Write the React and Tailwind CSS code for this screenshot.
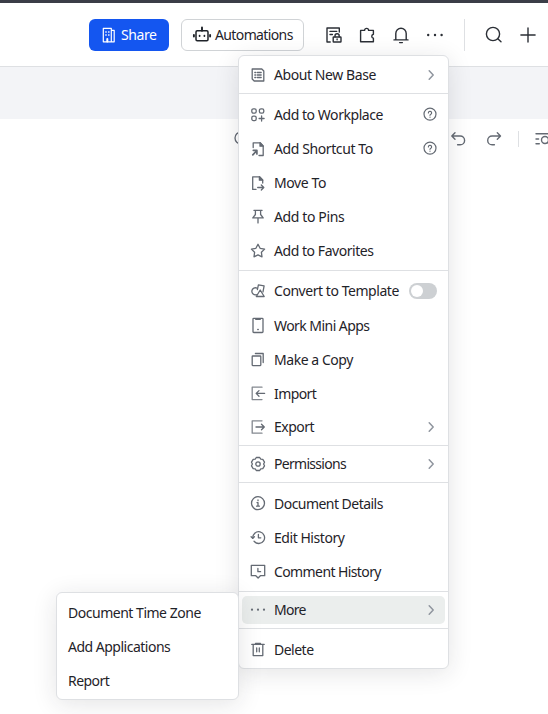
const ICONS = {
  about: (
    <>
      <path d="M1.2 1h9.6l2 2v10H3.2l-2-2z" />
      <path d="M3.8 4.5h.9M6.3 4.5h3.9M3.8 7h.9M6.3 7h3.9M3.8 9.5h.9M6.3 9.5h3.9" />
    </>
  ),
  workplace: (
    <>
      <rect x=".8" y=".8" width="4.4" height="4.4" rx="1.6" />
      <rect x="8.4" y=".8" width="4.4" height="4.4" rx="1.6" />
      <rect x=".8" y="8.2" width="4.4" height="4.4" rx="1.6" />
      <path d="M10.6 8v5M8.1 10.5h5" />
    </>
  ),
  shortcut: (
    <>
      <path d="M2.2 5.5V.8h7l3 3.2v9.5H8" />
      <path d="M9 .8v3.4h3.2z" fill="currentColor" />
      <path d="M1.8 12.8l3.8-4M2.3 8.3h3.6v3.6" strokeWidth="1.7" />
    </>
  ),
  move: (
    <>
      <path d="M5 13.4H1.7V.8h6.8l3.2 3.2v3" />
      <path d="M8.4 .8v3.4h3.3z" fill="currentColor" />
      <path d="M6.7 11.5h6M10.3 9l2.5 2.5-2.5 2.5" />
    </>
  ),
  pin: <path d="M2.9 .3h8.2M4.4 .3v4.2L1.8 7.9h10.4L9.6 4.5V.3M7 7.9v5" />,
  star: <path d="M7 .3l2.1 4 4.5.8-3.2 3.2.6 4.5L7 10.9 3 12.8l.6-4.5L.4 5.1l4.5-.8z" />,
  template: (
    <>
      <path d="M6.2 4.3A3.5 3.5 0 1 0 5.4 10.6" />
      <path d="M6.4 5.6l1-4.8 5.7 1.1-1.1 6" />
      <path d="M9.2 6l4 6.5H5.3z" />
    </>
  ),
  mini: (
    <>
      <rect x="2" y="-.7" width="10" height="14.2" rx=".8" />
      <path d="M5 .2h4" strokeWidth="1.8" />
      <path d="M6.8 10.5h.4" strokeWidth="1.5" />
    </>
  ),
  copy: (
    <>
      <rect x="1.2" y="3" width="8.6" height="9.6" rx=".5" />
      <path d="M4.4 .5h7.8v9" />
    </>
  ),
  import: (
    <>
      <path d="M11 .2H1.2v12.4H11" opacity=".8" />
      <path d="M13.6 6.4H5.2M8 3.6L5.2 6.4 8 9.2" />
    </>
  ),
  export: (
    <>
      <path d="M11 .8H1.2v12.4H11" opacity=".8" />
      <path d="M5 7h8.3M10.5 4.2L13.3 7l-2.8 2.8" />
    </>
  ),
  gear: (
    <>
      <path d="M5.3 .5h3.4l1.1 1.7 2 .1 1.7 2.9L12.6 7l.9 1.8-1.7 2.9-2 .1-1.1 1.7H5.3l-1.1-1.7-2-.1L.5 8.8 1.4 7 .5 5.2l1.7-2.9 2-.1z" />
      <circle cx="7" cy="7" r="2.2" />
    </>
  ),
  info: (
    <>
      <circle cx="7" cy="6.2" r="6.5" />
      <path d="M7 2.9v.8M6 5.6h1v3.6M5.6 9.2h2.8" />
    </>
  ),
  history: (
    <>
      <path d="M1.8 7.2A5.9 5.9 0 1 1 3 10.2" />
      <path d="M.1 5.7l1.6 1.6 1.7-1.6M7.4 3.4v3.4h2.4" />
    </>
  ),
  comment: (
    <>
      <path d="M.3 .3h13.4v10.4H9.4L7.1 13l-2.3-2.3H.3z" />
      <path d="M6.9 3.4v3.3h2.7" />
    </>
  ),
  dots: (
    <g fill="currentColor" stroke="none">
      <circle cx="1" cy="6.7" r="1.1" />
      <circle cx="7" cy="6.7" r="1.1" />
      <circle cx="13" cy="6.7" r="1.1" />
    </g>
  ),
  trash: (
    <>
      <path d="M.8 1.4h12.4M4.5 .4h5" />
      <path d="M2.2 1.6v11h9.6v-11M5.7 5v3.8M8.3 5v3.8" />
    </>
  ),
};

function Svg({ children, className = "", box = "0 0 14 14", width = 1.3 }) {
  return (
    <svg
      viewBox={box}
      className={`shrink-0 overflow-visible ${className}`}
      fill="none"
      stroke="currentColor"
      strokeWidth={width}
      strokeLinejoin="round"
      strokeLinecap="round"
    >
      {children}
    </svg>
  );
}

function Chevron() {
  return (
    <Svg className="mr-1 size-3.5 text-[#8f959e]" width={1.5}>
      <path d="M5.2 2.8L9.2 7l-4 4.2" />
    </Svg>
  );
}

function Help() {
  return (
    <Svg className="mr-[5px] size-3.5 text-[#646a73]" width={1.2}>
      <circle cx="7" cy="6.1" r="6" />
      <path d="M5.4 4.9a1.6 1.6 0 1 1 2.4 1.4c-.6.3-.8.5-.8 1M7 9v.2" />
    </Svg>
  );
}

function Toggle() {
  return (
    <span className="mr-[5px] flex h-4 w-7 shrink-0 items-center rounded-full bg-[#cdd0d3] px-0.5">
      <span className="size-3 rounded-full bg-white" />
    </span>
  );
}

function Item({ icon, label, end, h = "h-[34px]", t = "tracking-[-0.45px]", active = false }) {
  return (
    <div className={`mx-[3px] flex items-center rounded-[5px] pr-[3px] pl-[9px] ${h} ${active ? "bg-[#ebeeed]" : ""}`}>
      <Svg className="size-3.5 text-[#646a73]">{ICONS[icon]}</Svg>
      <span className={`ml-[9px] grow whitespace-nowrap leading-5 ${t}`}>{label}</span>
      {end}
    </div>
  );
}

const Line = () => <div className="h-px bg-[#dee0e3]" />;

export default function App() {
  return (
    <div className="relative h-[714px] w-[548px] overflow-hidden bg-white font-['Noto_Sans',sans-serif] text-sm text-[#1f2329]">
      <div className="h-[3px] bg-[#3b3d47]" />
      <header className="flex h-16 items-center border-b border-[#dee0e3] pl-[89px]">
        <button className="flex h-8 w-20 items-center rounded-md bg-[#1456f0] pl-[13px] text-white">
          <Svg className="size-3.5" width={1.2}>
            <path d="M1.3 13.8V.3h8v13.5zM9.3 2.4H12.2v11.4H9.3" />
            <path d="M3.8 4h.4M6.6 4h.4M3.8 7h.4M6.6 7h.4" strokeWidth="1.4" />
            <path d="M5.3 13.4v-2.4" strokeWidth="2" />
          </Svg>
          <span className="ml-[5px] tracking-[-0.4px]">Share</span>
        </button>
        <button className="ml-3 flex h-8 w-[123px] items-center rounded-md border border-[#d0d3d6] pl-[11px]">
          <Svg className="size-[18px]" box="0 0 18 18" width={1.5}>
            <rect x="3" y="4.8" width="12" height="10" rx="1.2" />
            <path d="M9 4.8V1.4M.9 9v1.6M17.1 9v1.6" strokeWidth="1.9" />
            <path d="M6.6 9.7v.3M11.4 9.7v.3" strokeWidth="1.8" />
          </Svg>
          <span className="ml-1 tracking-[-0.62px]">Automations</span>
        </button>
        <div className="ml-[22px] flex items-center text-[#2b2f36]">
          <Svg className="size-4" box="0 0 16 16" width={1.4}>
            <path d="M4.2 15H1V1h12.3v4M4 4.4h6.7M4 7.5h2.4" />
            <rect x="7.2" y="10" width="7.8" height="5" rx=".5" />
            <path d="M9 9.7V8.9a2.1 2.1 0 0 1 4.2 0v.8M11.1 12v.8" />
          </Svg>
          <Svg className="ml-[17px] size-4" box="0 0 16 16" width={1.4}>
            <path d="M1.6 3.4h4a2 2 0 1 1 4 0h4.8v3.8a2.1 2.1 0 0 0 0 4.1v3.5H1.6z" />
          </Svg>
          <Svg className="ml-[18px] size-4" box="0 0 16 16" width={1.4}>
            <path d="M2.8 12.9V6.5a5.2 5.2 0 0 1 10.4 0v6.4M1 12.9h14M6.6 15.6h2.8" />
          </Svg>
          <Svg className="ml-[18px] size-4" box="0 0 16 16">
            <g fill="currentColor" stroke="none">
              <circle cx="1.2" cy="8" r="1.2" />
              <circle cx="8" cy="8" r="1.2" />
              <circle cx="14.6" cy="8" r="1.2" />
            </g>
          </Svg>
          <div className="ml-[21px] h-8 w-px bg-[#dee0e3]" />
          <Svg className="ml-[21px] size-4" box="0 0 16 16" width={1.4}>
            <circle cx="7" cy="7" r="6.6" />
            <path d="M11.8 11.8l3.2 3" />
          </Svg>
          <Svg className="ml-[18px] size-4" box="0 0 16 16" width={1.4}>
            <path d="M8 .9v14.2M.9 8h14.2" />
          </Svg>
        </div>
      </header>
      <div className="h-[52px] bg-[#f3f4f7]" />
      <div className="flex h-10 items-center pl-[234px] text-[#646a73]">
        <Svg className="size-3.5">
          <circle cx="7" cy="6" r="6" />
        </Svg>
        <Svg className="ml-[203px] size-3.5" width={1.4}>
          <path d="M4 .8L.8 4 4 7.2M1 4h8.2a4.3 4.3 0 0 1 0 8.8H6.6" />
        </Svg>
        <Svg className="ml-[22px] size-3.5" width={1.4}>
          <path d="M10.3 .8L13.5 4l-3.2 3.2M13.3 4H5.1a4.3 4.3 0 0 0 0 8.8h2.3" />
        </Svg>
        <div className="ml-[17px] h-4 w-px shrink-0 bg-[#dee0e3]" />
        <Svg className="ml-4 size-4" box="0 0 16 16" width={1.4}>
          <path d="M1 2.8h14M1 8h2.6M1 12.8h3.3" />
          <circle cx="10" cy="9" r="3.5" />
          <path d="M12.5 11.5l2.6 2.6" />
        </Svg>
      </div>

      <div className="absolute top-[55px] left-[238px] h-[614px] w-[211px] rounded-md border border-[#dee0e3] bg-white shadow-[0_4px_24px_rgba(31,35,41,0.12)]">
        <Item h="h-[37px]" icon="about" label="About New Base" t="tracking-[-0.42px]" end={<Chevron />} />
        <Line />
        <div className="h-[176px] pt-1">
          <Item icon="workplace" label="Add to Workplace" end={<Help />} />
          <Item icon="shortcut" label="Add Shortcut To" t="tracking-[-0.4px]" end={<Help />} />
          <Item icon="move" label="Move To" t="tracking-[-0.4px]" />
          <Item icon="pin" label="Add to Pins" t="tracking-[-0.38px]" />
          <Item icon="star" label="Add to Favorites" />
        </div>
        <Line />
        <div className="h-[174px] pt-[3px]">
          <Item icon="template" label="Convert to Template" end={<Toggle />} />
          <Item h="h-[35px]" icon="mini" label="Work Mini Apps" t="tracking-[-0.55px]" />
          <Item icon="copy" label="Make a Copy" />
          <Item icon="import" label="Import" t="tracking-[-0.6px]" />
          <Item h="h-8" icon="export" label="Export" t="tracking-[-0.5px]" end={<Chevron />} />
        </div>
        <Line />
        <Item h="h-9" icon="gear" label="Permissions" t="tracking-[-0.7px]" end={<Chevron />} />
        <Line />
        <div className="h-[108px] pt-1">
          <Item icon="info" label="Document Details" t="tracking-[-0.53px]" />
          <Item icon="history" label="Edit History" />
          <Item icon="comment" label="Comment History" t="tracking-[-0.6px]" />
        </div>
        <Line />
        <div className="h-9 pt-1">
          <Item h="h-7" icon="dots" label="More" active t="tracking-[-0.7px]" end={<Chevron />} />
        </div>
        <Line />
        <div className="pt-1">
          <Item icon="trash" label="Delete" t="tracking-[-0.5px]" />
        </div>
      </div>

      <div className="absolute top-[592px] left-[56px] h-[108px] w-[183px] rounded-md border border-[#dee0e3] bg-white pt-[3px] pl-[11px] shadow-[0_4px_24px_rgba(31,35,41,0.12)]">
        <div className="flex h-[34px] items-center tracking-[-0.48px]">Document Time Zone</div>
        <div className="flex h-[34px] items-center tracking-[-0.5px]">Add Applications</div>
        <div className="flex h-[34px] items-center tracking-[-0.55px]">Report</div>
      </div>
    </div>
  );
}
